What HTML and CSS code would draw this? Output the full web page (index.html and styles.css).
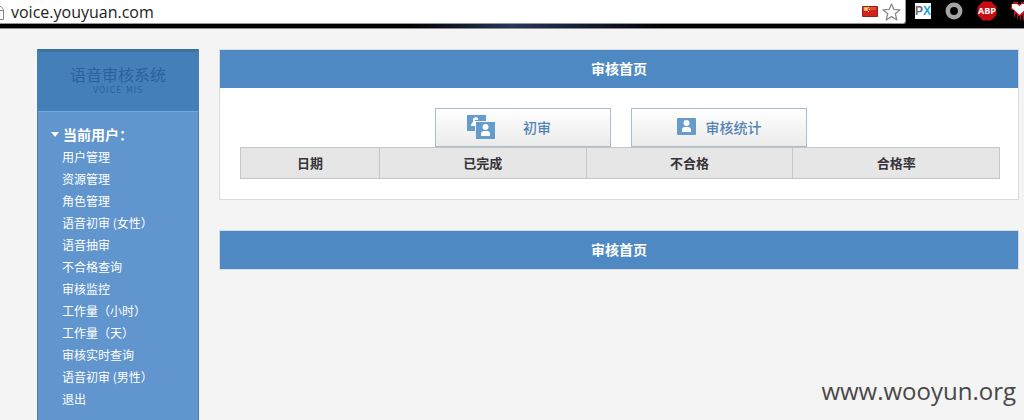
FILE: index.html
```html
<!DOCTYPE html>
<html lang="zh-CN">
<head>
<meta charset="utf-8">
<title>语音审核系统</title>
<link rel="stylesheet" href="styles.css">
</head>
<body>
<header class="browser">
  <div class="address">
    <svg class="page-icon" width="6" height="18" viewBox="0 0 6 18" aria-hidden="true"><path d="M0 3.500h1l2.500 3v10H0M0 7.500h3" fill="none" stroke="#888"/></svg>
    <input class="url" type="text" value="voice.youyuan.com" aria-label="地址">
    <svg class="flag" width="16" height="11" viewBox="0 0 16 11" aria-hidden="true"><path fill="#d3221c" stroke="#8e2420" d="M.5.5h15v10H.5z"/><path fill="#e84b36" d="M1 1h13v3H1z"/><path fill="#f3a04c" d="M2 1h4v4H2z"/><path fill="#ffe07a" d="M3 2h2v2H3zM6 1h1v1H6zM7 3h1v1H7zM6 5h1v1H6z"/></svg>
    <button class="star" type="button" aria-label="收藏"><svg width="19" height="18" viewBox="0 0 19 18"><path d="M9.500 1l2.300 5.300 6.200.5-4.700 3.900 1.500 6.300-5.300-3.400L4.200 17l1.500-6.300L1 6.800l6.200-.5z" fill="#fff" stroke="#8b8b8b" stroke-width="1.300" stroke-linejoin="round"/></svg></button>
  </div>
  <div class="extensions">
    <button type="button" class="ext px" aria-label="PX"><span class="p">P</span><span class="x">X</span></button>
    <button type="button" class="ext" aria-label="圆环"><svg width="18" height="18" viewBox="0 0 18 18"><circle cx="9" cy="9" r="6.200" fill="none" stroke="#a5a5a5" stroke-width="4.500"/></svg></button>
    <button type="button" class="ext" aria-label="ABP"><svg width="20" height="20" viewBox="0 0 20 20"><path d="M6 .5h8L19.500 6v8L14 19.500H6L.5 14V6z" fill="#c60d14"/><text class="abp" x="10" y="13" text-anchor="middle">ABP</text></svg></button>
    <button type="button" class="ext" aria-label="心形"><svg width="18" height="20" viewBox="0 0 18 20"><path d="M0 3h2V1h5v2h3V1h5v2h2v6h-1v8h-1v-4h-2v6h-1v-5h-2v5H9v-4H7v3H6v-5H4v3H3V9H0z" fill="#c20a19"/><path d="M1 3h5l2.500 2L11 3h4v5l-6.500 6L1 7z" fill="#fff"/></svg></button>
  </div>
</header>
<div class="layout">
  <aside class="sidebar">
    <div class="brand">
      <h1 class="brand-name">语音审核系统</h1>
      <p class="brand-sub">VOICE MIS</p>
    </div>
    <nav class="menu">
      <h2 class="user"><svg width="8" height="5" viewBox="0 0 8 5" aria-hidden="true"><path d="M0 0h8L4 5z" fill="#fff"/></svg>当前用户：</h2>
      <ul class="items">
        <li><a href="#">用户管理</a></li>
        <li><a href="#">资源管理</a></li>
        <li><a href="#">角色管理</a></li>
        <li><a href="#">语音初审 (女性）</a></li>
        <li><a href="#">语音抽审</a></li>
        <li><a href="#">不合格查询</a></li>
        <li><a href="#">审核监控</a></li>
        <li><a href="#">工作量（小时）</a></li>
        <li><a href="#">工作量（天）</a></li>
        <li><a href="#">审核实时查询</a></li>
        <li><a href="#">语音初审 (男性）</a></li>
        <li><a href="#">退出</a></li>
      </ul>
    </nav>
  </aside>
  <main class="main">
    <section class="panel">
      <h2 class="panel-title">审核首页</h2>
      <div class="panel-body">
        <div class="actions">
          <a class="action first" href="#"><svg width="28" height="24" viewBox="0 0 28 24" aria-hidden="true"><path d="M0 0h19v6H8v10H0z" fill="#659bcd"/><path d="M6 6q-1-3 3-4l2 1v2H8v6H4q0-3 2-4z" fill="#fff"/><path d="M9 7h19v17H9z" fill="#659bcd"/><circle cx="18.500" cy="12" r="3" fill="#fff"/><path d="M14 21v-2q0-3 3-3h3q3 0 3 3v2z" fill="#fff"/></svg>初审</a>
          <a class="action" href="#"><svg width="19" height="17" viewBox="0 0 19 17" aria-hidden="true"><rect width="19" height="17" rx="1" fill="#659bcd"/><circle cx="9.500" cy="5" r="3" fill="#fff"/><path d="M5 14v-2q0-3 3-3h3q3 0 3 3v2z" fill="#fff"/></svg>审核统计</a>
        </div>
        <table class="stats">
          <colgroup><col class="col-date"><col><col><col></colgroup>
          <thead><tr><th scope="col">日期</th><th scope="col">已完成</th><th scope="col">不合格</th><th scope="col">合格率</th></tr></thead>
        </table>
      </div>
    </section>
    <section class="panel">
      <h2 class="panel-title">审核首页</h2>
    </section>
  </main>
</div>
<div class="watermark">www.wooyun.org</div>
</body>
</html>
```
FILE: styles.css
```css
* { box-sizing: border-box; }
html { height: 100%; }
body {
  margin: 0;
  height: 100%;
  display: flex;
  flex-direction: column;
  overflow: hidden;
  background: #f4f4f4;
  font: 12px/22px "Noto Sans CJK SC", sans-serif;
}
h1, h2, p, ul { margin: 0; padding: 0; }
button { padding: 0; border: 0; background: none; }
a { color: inherit; text-decoration: none; }
svg { display: block; flex: none; }

.browser {
  flex: none;
  display: flex;
  height: 29px;
  padding-bottom: 4px;
  background: linear-gradient(90deg, #000 40%, #27345c 50%, #000 65%);
  border-bottom: 1px solid #8d8d92;
}
.address {
  flex: 1;
  display: flex;
  align-items: center;
  height: 24px;
  padding-right: 4px;
  background: #fff;
  border: solid #999;
  border-width: 0 1px 1px 0;
  border-radius: 0 0 3px 0;
}
.url {
  flex: 1;
  min-width: 0;
  height: 22px;
  margin: 0;
  padding: 0 5px;
  border: 0;
  outline: 0;
  background: none;
  color: #222;
  font: 16px/22px "Open Sans", sans-serif;
}
.star { margin-left: 4px; }
.extensions { flex: none; display: flex; align-items: center; gap: 14px; width: 118px; height: 22px; padding-left: 9px; overflow: hidden; }
.ext { flex: none; }
.px { width: 16px; height: 16px; background: #fff; font: bold 12px/16px "Liberation Sans", sans-serif; }
.p { color: #68717b; }
.x { color: #18a5d9; }
.abp { fill: #fff; font: bold 9px "Open Sans", sans-serif; }

.layout { flex: 1; display: flex; gap: 20px; min-height: 0; padding: 20px 5px 0 37px; }
.sidebar {
  flex: none;
  width: 162px;
  min-height: 100%;
  background: #6195cd;
  border: solid #4a7fb6;
  border-width: 0 1px;
  color: #fff;
}
.brand {
  height: 63px;
  padding-top: 13px;
  background: #447fb9;
  border-top: 3px solid #3c739f;
  border-bottom: 1px solid #74a6df;
  color: #2b6299;
  text-align: center;
}
.brand-name { font-size: 16px; line-height: 18px; font-weight: 400; }
.brand-sub { font: 8px/16px "DejaVu Sans", sans-serif; letter-spacing: 1px; }
.menu { padding: 11px 0 0 13px; }
.user { display: flex; align-items: center; gap: 4px; font-size: 14px; line-height: 23px; }
.items { padding-left: 11px; list-style: none; }

.main { flex: 1; min-width: 0; display: flex; flex-direction: column; gap: 30px; }
.panel { background: #fff; border: 1px solid #d8dbdf; }
.panel-title { padding-bottom: 2px; background: #4f89c3; color: #fff; font-size: 14px; line-height: 36px; text-align: center; }
.panel-body { padding: 20px 18px 20px 20px; }
.actions { display: flex; justify-content: center; gap: 20px; padding-left: 2px; }
.action {
  display: flex;
  align-items: center;
  justify-content: center;
  gap: 10px;
  width: 176px;
  height: 39px;
  padding-bottom: 2px;
  border: 1px solid #a9bdd0;
  background: linear-gradient(#fff, #ebebeb);
  color: #5584b5;
  font-size: 14px;
  font-weight: 500;
}
.first { gap: 28px; padding-right: 28px; }
.stats { width: 100%; border-collapse: collapse; table-layout: fixed; }
.stats th { height: 31px; padding: 0; border: 1px solid #c4c7ca; background: #e6e6e6; color: #38333a; font-size: 13px; line-height: 30px; }
.col-date { width: 139px; }

.watermark { position: absolute; right: 8px; bottom: 8px; color: #484848; font: 24px/42px "Open Sans", sans-serif; }
```
